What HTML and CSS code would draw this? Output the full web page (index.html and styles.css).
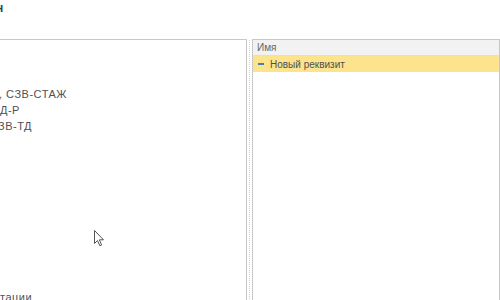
FILE: index.html
```html
<!DOCTYPE html>
<html lang="ru">
<head>
    <meta charset="utf-8" />
    <link rel="stylesheet" href="styles.css">
</head>
<body>
    <div class="page">
        <div class="title">н</div>
        <div class="panels">
            <div class="left-panel">
                <div class="tree">
                    <div class="tree-item first">, СЗВ-СТАЖ</div>
                    <div class="tree-item second">Д-Р</div>
                    <div class="tree-item third">ЗВ-ТД</div>
                    <div class="tree-spacer"></div>
                    <div class="tree-item last">тации</div>
                </div>
                <svg class="cursor" width="12" height="18" viewBox="0 0 12 18">
                    <path d="M0.5 0.5 L0.5 13.5 L3.5 10.5 L5.8 15.8 L7.6 15 L5.4 9.8 L9.5 9.8 Z" fill="#fff" stroke="#555" stroke-width="1"/>
                </svg>
            </div>
            <div class="splitter"></div>
            <div class="right-panel">
                <div class="grid-header">Имя</div>
                <div class="grid-row selected">
                    <span class="minus-icon"></span>
                    <span>Новый реквизит</span>
                </div>
            </div>
        </div>
    </div>
</body>
</html>
```

FILE: styles.css
```css
:root {
    --border-color: #c8c8c8;
    --text-color: #505050;
    --header-bg: #f2f2f2;
    --selected-bg: #fde38c;
}

body {
    margin: 0;
    font-family: Arial, "Liberation Sans", sans-serif;
    font-size: 11px;
    color: var(--text-color);
    background: #fff;
    width: 500px;
    height: 300px;
    overflow: hidden;
}

.page {
    display: flex;
    flex-direction: column;
    height: 300px;
}

.title {
    height: 39px;
    padding-top: 1px;
    margin-left: -4px;
    font-size: 12px;
    color: #1c4a5a;
    font-weight: bold;
    box-sizing: border-box;
    flex-shrink: 0;
}

.panels {
    flex: 1;
    display: flex;
    min-height: 0;
}

.left-panel {
    position: relative;
    width: 247px;
    border: 1px solid var(--border-color);
    border-left: none;
    border-bottom: none;
    box-sizing: border-box;
    overflow: hidden;
}

.tree {
    display: flex;
    flex-direction: column;
    padding-top: 46px;
    font-size: 11px;
    letter-spacing: 0.5px;
}

.tree-item {
    height: 16px;
    line-height: 16px;
    white-space: nowrap;
}

.tree-item.first {
    margin-left: -1px;
}

.tree-item.third {
    margin-left: -2px;
}

.tree-spacer {
    height: 155px;
}

.cursor {
    position: absolute;
    left: 94px;
    top: 190px;
}

.splitter {
    width: 5px;
    background-image: linear-gradient(#d0d0d0 50%, transparent 50%);
    background-size: 1px 2px;
    background-repeat: repeat-y;
    background-position: 2px 1px;
}

.right-panel {
    flex: 1;
    border: 1px solid var(--border-color);
    border-bottom: none;
    display: flex;
    flex-direction: column;
}

.grid-header {
    height: 15px;
    line-height: 15px;
    padding-left: 4px;
    background: var(--header-bg);
    border-bottom: 1px solid #dedede;
    color: #666;
    font-size: 10px;
}

.grid-row {
    height: 16px;
    display: flex;
    align-items: center;
    gap: 6px;
    padding-left: 5px;
    font-size: 10px;
}

.grid-row.selected {
    background: var(--selected-bg);
}

.minus-icon {
    width: 6px;
    height: 2px;
    background: #4a7db5;
}
```
